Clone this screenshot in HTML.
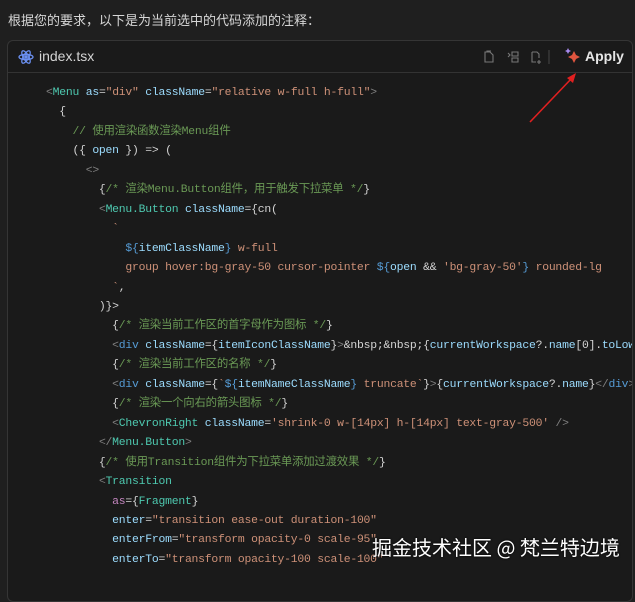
<!DOCTYPE html>
<html><head><meta charset="utf-8"><style>
html,body{margin:0;padding:0;width:635px;height:572px;overflow:hidden;background:#1f1f1f;}
.title{position:absolute;left:8px;top:10px;color:#d6d6d6;font:13px "Liberation Sans","Noto Sans CJK SC",sans-serif;}
.card{position:absolute;left:7px;top:40px;width:624px;height:560px;border:1px solid #353535;border-radius:6px;background:#1a1a1a;overflow:hidden;}
.hdr{position:absolute;left:0;top:0;width:100%;height:31px;border-bottom:1px solid #333;}
.fn{position:absolute;left:31px;top:7px;color:#d4d4d4;font:14px "Liberation Sans",sans-serif;}
.apply{position:absolute;left:577px;top:7px;color:#e6e6e6;font:bold 14px "Liberation Sans",sans-serif;}
pre{position:absolute;left:38px;top:43px;margin:0;font:11.4px/19.45px "Liberation Mono","Noto Sans CJK SC",monospace;letter-spacing:-0.22px;color:#d4d4d4;white-space:pre;}
.g{color:#808080}.t{color:#4ec9b0}.a{color:#9cdcfe}.s{color:#ce9178}.c{color:#6a9955}.p{color:#c586c0}.b{color:#569cd6}
.wm{position:absolute;left:372px;top:532px;color:#fff;font:20px "Noto Sans CJK SC",sans-serif;text-shadow:0 0 2px #000;}
</style></head><body>
<div class="title">根据您的要求，以下是为当前选中的代码添加的注释：</div>
<div class="card"><div class="hdr">
<svg style="position:absolute;left:10px;top:8px" width="16" height="16" viewBox="0 0 16 16" fill="none" stroke="#6a8ff0" stroke-width="1.3"><ellipse cx="8" cy="8" rx="7" ry="2.7"/><ellipse cx="8" cy="8" rx="7" ry="2.7" transform="rotate(60 8 8)"/><ellipse cx="8" cy="8" rx="7" ry="2.7" transform="rotate(120 8 8)"/><circle cx="8" cy="8" r="1.2" fill="#6a8ff0"/></svg>
<div class="fn">index.tsx</div>
<svg style="position:absolute;left:474px;top:8px" width="80" height="16" viewBox="0 0 80 16" fill="none" stroke="#777" stroke-width="1.1"><path d="M3 3h5l3 3v7H3z"/><path d="M5 3V2h4"/><path d="M26 4l2 2-2 2M30 3h6v4h-6zM30 9h6v4h-6z"/><path d="M50 3h5l2 2v4M50 3v10h4M57 11v4M55 13h4"/><path d="M67 1v14" stroke="#444"/></svg>
<svg style="position:absolute;left:556px;top:6px" width="18" height="18" viewBox="0 0 18 18"><path d="M10 4l2 4 4 2-4 2-2 4-2-4-4-2 4-2z" fill="#e0553f"/><path d="M4 1l1 2 2 1-2 1-1 2-1-2-2-1 2-1z" fill="#a98bf0"/></svg>
<div class="apply">Apply</div>
</div>
<pre><span class="g">&lt;</span><span class="t">Menu</span> <span class="a">as</span>=<span class="s">"div"</span> <span class="a">className</span>=<span class="s">"relative w-full h-full"</span><span class="g">&gt;</span>
  {
    <span class="c">// 使用渲染函数渲染Menu组件</span>
    ({ <span class="a">open</span> }) =&gt; (
      <span class="g">&lt;&gt;</span>
        {<span class="c">/* 渲染Menu.Button组件，用于触发下拉菜单 */</span>}
        <span class="g">&lt;</span><span class="t">Menu.Button</span> <span class="a">className</span>={cn(
          <span class="s">`</span>
            <span class="b">${</span><span class="a">itemClassName</span><span class="b">}</span><span class="s"> w-full</span>
<span class="s">            group hover:bg-gray-50 cursor-pointer </span><span class="b">${</span><span class="a">open</span> &amp;&amp; <span class="s">'bg-gray-50'</span><span class="b">}</span><span class="s"> rounded-lg</span>
<span class="s">          `</span>,
        )}&gt;
          {<span class="c">/* 渲染当前工作区的首字母作为图标 */</span>}
          <span class="g">&lt;</span><span class="b">div</span> <span class="a">className</span>={<span class="a">itemIconClassName</span>}<span class="g">&gt;</span>&amp;nbsp;&amp;nbsp;{<span class="a">currentWorkspace</span>?.<span class="a">name</span>[0].<span class="a">toLowerCase</span>()}
          {<span class="c">/* 渲染当前工作区的名称 */</span>}
          <span class="g">&lt;</span><span class="b">div</span> <span class="a">className</span>={<span class="s">`</span><span class="b">${</span><span class="a">itemNameClassName</span><span class="b">}</span><span class="s"> truncate`</span>}<span class="g">&gt;</span>{<span class="a">currentWorkspace</span>?.<span class="a">name</span>}<span class="g">&lt;/</span><span class="b">div</span><span class="g">&gt;</span>
          {<span class="c">/* 渲染一个向右的箭头图标 */</span>}
          <span class="g">&lt;</span><span class="t">ChevronRight</span> <span class="a">className</span>=<span class="s">'shrink-0 w-[14px] h-[14px] text-gray-500'</span> <span class="g">/&gt;</span>
        <span class="g">&lt;/</span><span class="t">Menu.Button</span><span class="g">&gt;</span>
        {<span class="c">/* 使用Transition组件为下拉菜单添加过渡效果 */</span>}
        <span class="g">&lt;</span><span class="t">Transition</span>
          <span class="p">as</span>={<span class="t">Fragment</span>}
          <span class="a">enter</span>=<span class="s">"transition ease-out duration-100"</span>
          <span class="a">enterFrom</span>=<span class="s">"transform opacity-0 scale-95"</span>
          <span class="a">enterTo</span>=<span class="s">"transform opacity-100 scale-100"</span></pre>
</div>
<svg style="position:absolute;left:0;top:0" width="635" height="572"><path d="M530 122L572 78" stroke="#e02020" stroke-width="1.6"/><path d="M576 73l-3 10-6-5z" fill="#e02020"/></svg>
<div class="wm">掘金技术社区 @ 梵兰特边境</div>
</body></html>
